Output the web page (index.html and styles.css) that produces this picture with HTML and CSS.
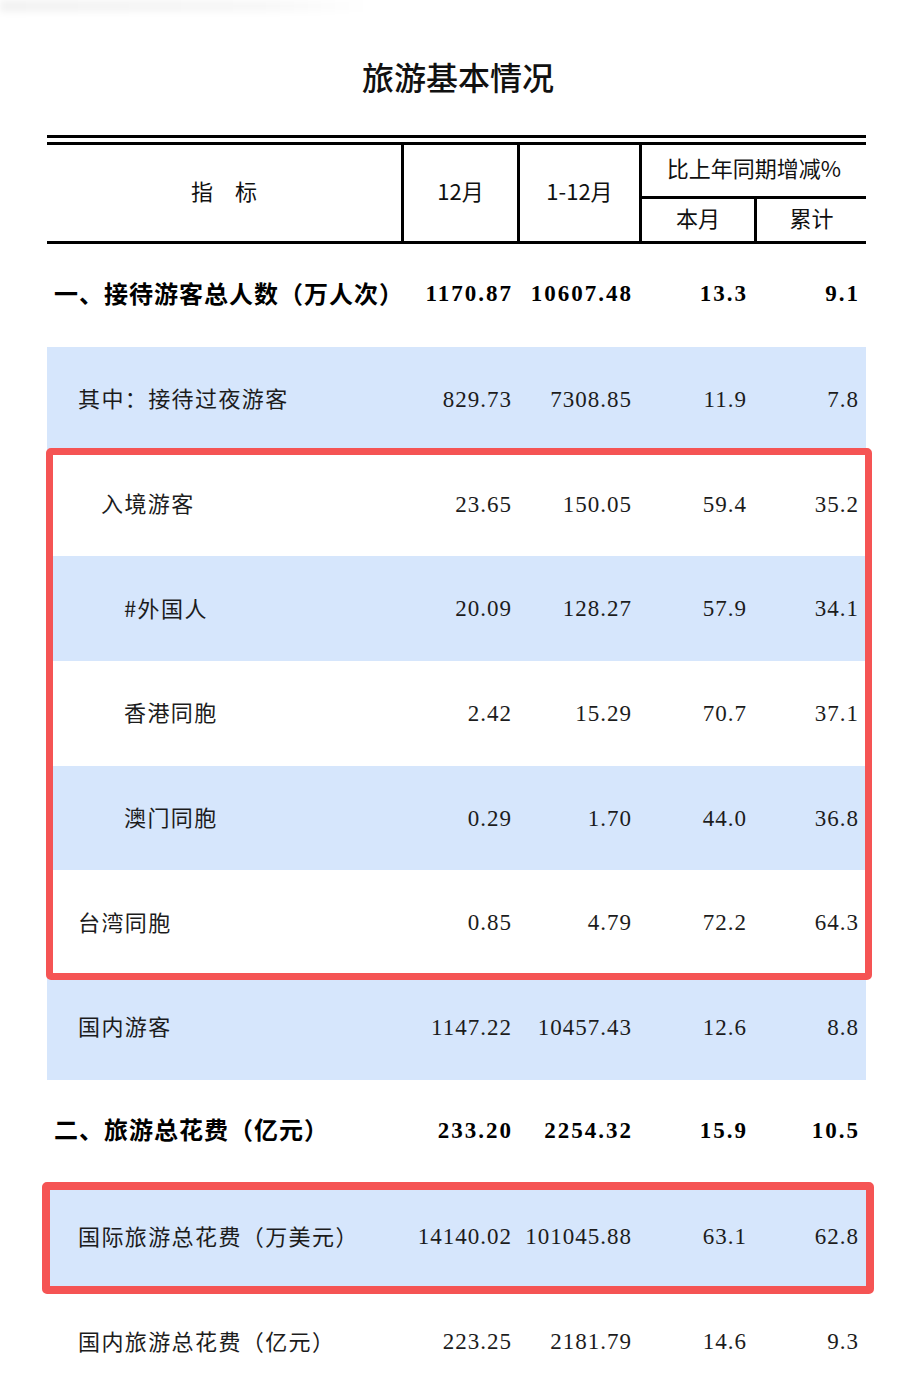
FILE: index.html
```html
<!DOCTYPE html>
<html lang="zh-CN">
<head>
<meta charset="utf-8">
<title>旅游基本情况</title>
<link rel="stylesheet" href="styles.css">
</head>
<body>
<div class="page">
  <div class="smudge"></div>
  <h1 class="title">旅游基本情况</h1>
  <div class="table">
    <div class="thead">
      <div class="thead-grid">
        <div class="h h-name">指　标</div>
        <div class="h h-div">12月</div>
        <div class="h h-div">1-12月</div>
        <div class="h-group h-div">
          <div class="h-group-title">比上年同期增减%</div>
          <div class="h-sub">
            <div class="h">本月</div>
            <div class="h h-div">累计</div>
          </div>
        </div>
      </div>
    </div>
    <div class="tbody">
      <div class="row row-first bold">
        <div class="label ind0">一、接待游客总人数（万人次）</div>
        <div class="num c2">1170.87</div>
        <div class="num c3">10607.48</div>
        <div class="num c4">13.3</div>
        <div class="num c5">9.1</div>
      </div>
      <div class="row blue">
        <div class="label ind1">其中：接待过夜游客</div>
        <div class="num c2">829.73</div>
        <div class="num c3">7308.85</div>
        <div class="num c4">11.9</div>
        <div class="num c5">7.8</div>
      </div>
      <div class="row">
        <div class="label ind2">入境游客</div>
        <div class="num c2">23.65</div>
        <div class="num c3">150.05</div>
        <div class="num c4">59.4</div>
        <div class="num c5">35.2</div>
      </div>
      <div class="row blue">
        <div class="label ind3">#外国人</div>
        <div class="num c2">20.09</div>
        <div class="num c3">128.27</div>
        <div class="num c4">57.9</div>
        <div class="num c5">34.1</div>
      </div>
      <div class="row">
        <div class="label ind3">香港同胞</div>
        <div class="num c2">2.42</div>
        <div class="num c3">15.29</div>
        <div class="num c4">70.7</div>
        <div class="num c5">37.1</div>
      </div>
      <div class="row blue">
        <div class="label ind3">澳门同胞</div>
        <div class="num c2">0.29</div>
        <div class="num c3">1.70</div>
        <div class="num c4">44.0</div>
        <div class="num c5">36.8</div>
      </div>
      <div class="row">
        <div class="label ind1">台湾同胞</div>
        <div class="num c2">0.85</div>
        <div class="num c3">4.79</div>
        <div class="num c4">72.2</div>
        <div class="num c5">64.3</div>
      </div>
      <div class="row blue">
        <div class="label ind1">国内游客</div>
        <div class="num c2">1147.22</div>
        <div class="num c3">10457.43</div>
        <div class="num c4">12.6</div>
        <div class="num c5">8.8</div>
      </div>
      <div class="row bold">
        <div class="label ind0">二、旅游总花费（亿元）</div>
        <div class="num c2">233.20</div>
        <div class="num c3">2254.32</div>
        <div class="num c4">15.9</div>
        <div class="num c5">10.5</div>
      </div>
      <div class="row blue">
        <div class="label ind1">国际旅游总花费（万美元）</div>
        <div class="num c2">14140.02</div>
        <div class="num c3">101045.88</div>
        <div class="num c4">63.1</div>
        <div class="num c5">62.8</div>
      </div>
      <div class="row">
        <div class="label ind1">国内旅游总花费（亿元）</div>
        <div class="num c2">223.25</div>
        <div class="num c3">2181.79</div>
        <div class="num c4">14.6</div>
        <div class="num c5">9.3</div>
      </div>
    </div>
    <div class="mark mark-1"></div>
    <div class="mark mark-2"></div>
  </div>
</div>
</body>
</html>
```

FILE: styles.css
```css
* { box-sizing: border-box; }

body {
  margin: 0;
  background: #ffffff;
  font-family: "Noto Sans CJK SC", "Noto Sans", sans-serif;
  color: #111111;
}

.page {
  width: 916px;
  position: relative;
}

.smudge {
  position: absolute;
  top: 0;
  left: 0;
  width: 370px;
  height: 12px;
  background: linear-gradient(to right, rgba(0, 0, 0, 0.05), rgba(0, 0, 0, 0.03) 70%, rgba(0, 0, 0, 0));
  filter: blur(3px);
}

.title {
  margin: 0 0 43px 0;
  padding-top: 60px;
  height: 92px;
  line-height: 32px;
  font-size: 32px;
  font-weight: 500;
  text-align: center;
  color: #111111;
}

.table {
  position: relative;
  margin-left: 47px;
  width: 819px;
}

/* header */
.thead {
  border-top: 3px solid #000;
  padding-top: 4px;
}

.thead-grid {
  display: grid;
  grid-template-columns: 354px 116px 122px 227px;
  height: 102px;
  border-top: 3px solid #000;
  border-bottom: 3px solid #000;
}

.h {
  display: flex;
  align-items: center;
  justify-content: center;
  font-size: 22px;
  line-height: 1;
  color: #111;
  padding-bottom: 6px;
}

.h-div {
  border-left: 3px solid #000;
}

.h-name {
  padding-bottom: 7px;
}

.h-group {
  display: flex;
  flex-direction: column;
  padding-bottom: 0;
}

.h-group-title {
  height: 54px;
  border-bottom: 3px solid #000;
  display: flex;
  align-items: center;
  justify-content: center;
  font-size: 22px;
  line-height: 1;
  padding-bottom: 8px;
}

.h-sub {
  flex: 1;
  display: grid;
  grid-template-columns: 112px 112px;
}

/* body */
.row {
  display: grid;
  grid-template-columns: 354px 116px 122px 115px 112px;
  height: 104.7px;
  align-items: center;
  color: #1c1c1c;
}

.row-first {
  height: 103px;
}

.row.blue {
  background: #d6e6fc;
}

.label {
  font-size: 22px;
  letter-spacing: 1.4px;
  line-height: 1;
  white-space: nowrap;
  padding-bottom: 4px;
}

.ind0 { padding-left: 7px; }
.ind1 { padding-left: 31px; }
.ind2 { padding-left: 54px; }
.ind3 { padding-left: 77px; }

.num {
  font-family: "Liberation Serif", "Times New Roman", serif;
  font-size: 23px;
  letter-spacing: 1px;
  line-height: 1;
  text-align: right;
  white-space: nowrap;
}

.c2 { padding-right: 5px; }
.c3 { padding-right: 7px; }
.c4 { padding-right: 7px; }
.c5 { padding-right: 7px; }

.row.bold {
  color: #000;
}

.row.bold .label {
  font-size: 24px;
  font-weight: 700;
  letter-spacing: 1px;
  padding-bottom: 6px;
}

.row.bold .num {
  font-weight: 700;
  letter-spacing: 2px;
  padding-bottom: 4px;
}

.row.bold .c2 { padding-right: 4px; }
.row.bold .c3,
.row.bold .c4,
.row.bold .c5 { padding-right: 6px; }

/* highlight boxes over the table */
.mark {
  position: absolute;
  border: 7px solid #f55454;
  border-radius: 5px;
  pointer-events: none;
}

.mark-1 {
  left: -1px;
  top: 313px;
  width: 826px;
  height: 532px;
}

.mark-2 {
  left: -5px;
  top: 1047px;
  width: 832px;
  height: 112px;
  border-width: 8px;
}
```
